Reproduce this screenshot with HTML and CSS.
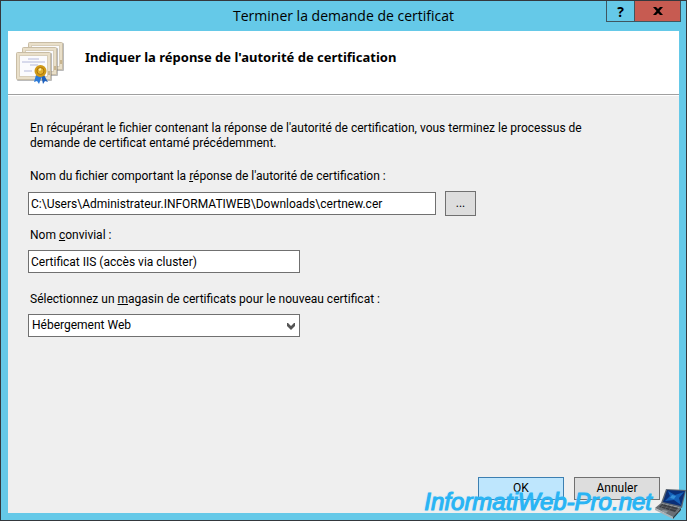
FILE: index.html
```html
<!DOCTYPE html>
<html lang="fr">
<head>
  <meta charset="utf-8">
  <title>Terminer la demande de certificat</title>
  <link rel="stylesheet" href="styles.css">
</head>
<body>
  <div class="window">
    <div class="titlebar">
      <h1>Terminer la demande de certificat</h1>
      <div class="window-buttons">
        <button type="button" class="help" aria-label="Aide">?</button>
        <button type="button" class="close" aria-label="Fermer">
          <svg width="10" height="8" viewBox="0 0 10 8"><path d="M0 0h3l2 2 2-2h3L6.500 4 10 8H7L5 6 3 8H0l3.500-4z" fill="#000"/></svg>
        </button>
      </div>
    </div>

    <form class="dialog">
      <div class="header">
        <svg class="cert-icon" width="50" height="44" viewBox="0 0 50 44">
          <defs>
            <g id="sheet">
              <rect x="1" y="1" width="35" height="28" rx="1" fill="#777" opacity=".5"/>
              <rect x=".5" y=".5" width="34" height="27" rx="1" fill="#e9dfc9" stroke="#c9bda5"/>
              <rect x="3.500" y="3.500" width="28" height="21" fill="#fbfbfd" stroke="#d8ceb9"/>
            </g>
          </defs>
          <use href="#sheet" x="12" y="1"/>
          <use href="#sheet" x="6" y="6"/>
          <use href="#sheet" x="0" y="11"/>
          <path d="M45 19v4M39 25v4M33 30v4" stroke="#a98c54" stroke-width="1"/>
          <path d="M12 18h11M6 21h23M14 24h8M8 30h8" stroke="#b4b9da" stroke-width="1"/>
          <path d="M20 34l-2 7 3-1 2 3 3-8z" fill="#2d7bd8"/>
          <path d="M25 34l2 9 2-3 3 1-4-7z" fill="#1c5fbd"/>
          <circle cx="24.500" cy="30" r="6" fill="#d19a16"/>
          <circle cx="24.500" cy="30" r="3.500" fill="#e2b02e" stroke="#a97409"/>
          <path d="M23 29l2-1" stroke="#fff1a8" stroke-width="2"/>
        </svg>
        <h2>Indiquer la réponse de l'autorité de certification</h2>
      </div>

      <div class="content">
        <p class="intro">En récupérant le fichier contenant la réponse de l'autorité de certification, vous terminez le processus de demande de certificat entamé précédemment.</p>

        <div class="field">
          <label for="file">Nom du fichier comportant la <u>r</u>éponse de l'autorité de certification :</label>
          <div class="file-row">
            <input type="text" id="file" value="C:\Users\Administrateur.INFORMATIWEB\Downloads\certnew.cer">
            <button type="button" class="browse" aria-label="Parcourir">...</button>
          </div>
        </div>

        <div class="field">
          <label for="name">Nom <u>c</u>onvivial :</label>
          <input type="text" id="name" class="short" value="Certificat IIS (accès via cluster)">
        </div>

        <div class="field store">
          <label for="store">Sélectionnez un <u>m</u>agasin de certificats pour le nouveau certificat :</label>
          <div class="select short">
            <select id="store">
              <option>Hébergement Web</option>
            </select>
            <svg class="arrow" width="8" height="7" viewBox="0 0 8 7"><path d="M0 0h1l3 3 3-3h1v3L4 7 0 3z" fill="#555"/></svg>
          </div>
        </div>
      </div>

      <div class="actions">
        <button type="button" class="default">OK</button>
        <button type="button">Annuler</button>
      </div>
    </form>
  </div>

  <div class="watermark">
    <span>InformatiWeb-Pro.net</span>
    <svg width="32" height="32" viewBox="0 0 32 32">
      <path d="M11 1l20 1-4 18L6 15z" fill="#5c6672"/>
      <path d="M12 2l18 1-4 15L8 14z" fill="#0a2f78"/>
      <path d="M13 3l7 4 9-3-5 6 2 7-7-5-9 1 5-5z" fill="#1460b8"/>
      <path d="M17 7l4 1-2 3-4-1z" fill="#3590d8"/>
      <path d="M6 15l20 5-8 9L0 20z" fill="#6a6f75"/>
      <path d="M7 16l16 4-3 4-16-5z" fill="#393c41"/>
      <path d="M6 18l16 4M9 16l-3 4M13 17l-3 4M17 18l-3 4" stroke="#70757b" stroke-width=".5"/>
      <path d="M8 22l5 1-2 2-5-2z" fill="#92979c"/>
      <path d="M0 20l18 9v2L0 22z" fill="#aab0b5"/>
      <path d="M18 29l8-9v2l-8 9z" fill="#33373b"/>
    </svg>
  </div>
</body>
</html>
```

FILE: styles.css
```css
* {
  box-sizing: border-box;
}
body {
  margin: 0;
  font-family: Roboto, "Open Sans", sans-serif;
  font-size: 12px;
  line-height: 15px;
  color: #000;
}
button, input, select {
  font: inherit;
  color: inherit;
}
.window {
  display: flex;
  flex-direction: column;
  min-height: 100vh;
  padding: 0 7px 7px;
  border: 1px solid #34383d;
  background-color: #65c9e8;
}
.titlebar {
  display: grid;
  grid-template-columns: 1fr auto 1fr;
  height: 30px;
  font-family: "Open Sans", "Noto Sans", sans-serif;
}
h1 {
  grid-column: 2;
  margin: 0;
  font-size: 14px;
  font-weight: normal;
  line-height: 29px;
}
.window-buttons {
  display: flex;
  justify-self: end;
  height: 21px;
  margin-right: -2px;
  border: 1px solid #3f5660;
  border-top: 0;
}
.window-buttons button {
  display: flex;
  align-items: center;
  justify-content: center;
  padding: 0;
  border: 0;
}
.window-buttons .help {
  width: 28px;
  border-right: 1px solid #3f5660;
  background: none;
  font-size: 14px;
  font-weight: bold;
}
.close {
  width: 45px;
  background-color: #c75b51;
}
.dialog {
  display: flex;
  flex-direction: column;
  flex: 1;
  background-color: #efefef;
}
.header {
  display: flex;
  align-items: center;
  gap: 19px;
  height: 64px;
  padding-left: 8px;
  background-color: #fff;
  border-bottom: 1px solid #a0a0a0;
}
h2 {
  margin: 0 0 12px;
  font-family: "Noto Sans", sans-serif;
  font-size: 13px;
  line-height: 18px;
}
.content {
  flex: 1;
  padding: 25px 20px 0;
  border-top: 1px solid #fff;
}
.intro {
  max-width: 570px;
  margin: 0 0 18px;
  padding-left: 2px;
}
.field {
  display: flex;
  flex-direction: column;
  gap: 7px;
  margin-bottom: 12px;
}
.field label {
  padding-left: 2px;
}
.store {
  margin-top: 19px;
}
.file-row {
  display: flex;
  align-items: center;
  gap: 9px;
}
input {
  height: 23px;
  padding: 0 2px;
  border: 1px solid #707070;
  background-color: #fff;
}
.file-row input {
  flex: 0 1 408px;
}
.short {
  width: 272px;
}
.select {
  position: relative;
}
select {
  appearance: none;
  width: 100%;
  height: 23px;
  padding: 0 20px 0 3px;
  border: 1px solid #707070;
  border-radius: 0;
  background-color: #fff;
}
.arrow {
  position: absolute;
  top: 9px;
  right: 5px;
  pointer-events: none;
}
.browse, .actions button {
  padding: 0;
  border: 1px solid #707070;
  background-color: #ddd;
}
.browse {
  width: 31px;
  height: 25px;
}
.actions {
  display: flex;
  justify-content: flex-end;
  gap: 10px;
  padding: 0 19px 13px;
}
.actions button {
  width: 86px;
  height: 23px;
}
.actions .default {
  border-color: #3c7fb1;
  background-color: #bee6fd;
}
.watermark {
  position: absolute;
  right: 0;
  bottom: 0;
  display: flex;
  align-items: center;
  gap: 3px;
  font: italic 24px/32px "Liberation Sans", Arial, sans-serif;
  color: #28b4f4;
  -webkit-text-stroke: 1px #28b4f4;
  text-shadow: 0 0 2px #8fd8fa;
  pointer-events: none;
}
.watermark span {
  padding-bottom: 3px;
}
```
